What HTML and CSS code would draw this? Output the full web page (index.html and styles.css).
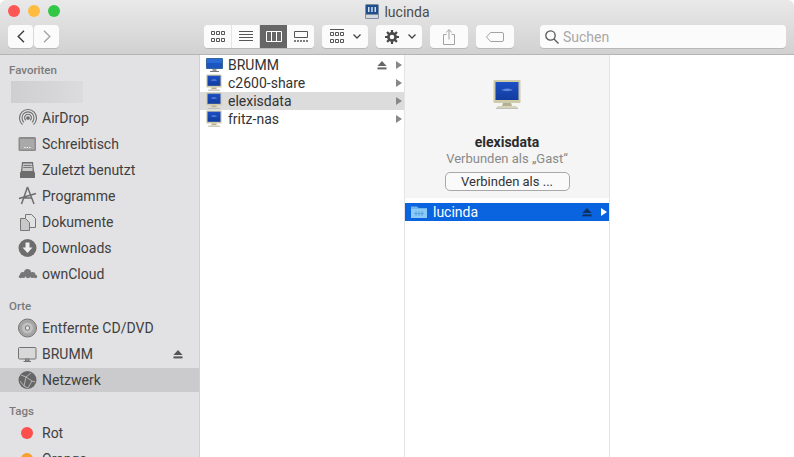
FILE: index.html
```html
<!DOCTYPE html>
<html lang="de">
<head>
    <meta charset="UTF-8">
    <meta name="viewport" content="width=device-width, initial-scale=1.0">
    <title>lucinda</title>
    <link rel="stylesheet" href="styles.css">
</head>
<body>
    <svg class="defs" width="0" height="0">
        <defs>
            <linearGradient id="screen" x1="0" y1="0" x2="0" y2="1">
                <stop offset="0" stop-color="#1d4fc4"/>
                <stop offset="1" stop-color="#123c9e"/>
            </linearGradient>
        </defs>
        <symbol id="monitor" viewBox="0 0 32 32">
            <rect x="2.500" y="1" width="27" height="23" rx="1" fill="#cfcaa8"/>
            <rect x="4.500" y="3" width="23" height="18" fill="url(#screen)"/>
            <path d="M10 11c4-2 8-2 12 0-4 1.500-8 1.500-12 0z" fill="#5f86d8"/>
            <path d="M12 24h8l1 3H11z" fill="#b5b092"/>
            <path d="M7 27h18l2 2H5z" fill="#d8d4ba"/>
            <path d="M5 29h22v1H5z" fill="#9a9a9a" opacity=".6"/>
        </symbol>
        <symbol id="eject" viewBox="0 0 10 9">
            <path d="M5 0l4.500 5H.5z"/>
            <rect x=".5" y="6.400" width="9" height="2"/>
        </symbol>
    </svg>

    <div class="window">
        <header class="chrome">
            <div class="titlebar">
                <div class="lights">
                    <span class="light red"></span>
                    <span class="light yellow"></span>
                    <span class="light green"></span>
                </div>
                <div class="title">
                    <svg width="16" height="17" viewBox="0 0 16 17">
                        <rect x="1" y="1" width="14" height="15" rx="1.500" fill="#7e8ea0"/>
                        <rect x="2" y="2" width="12" height="9" fill="#1f4f8f"/>
                        <path d="M4 4h1.500v5H4zM7.200 4h1.500v5H7.200zM10.500 4H12v5h-1.500z" fill="#cfe0f2"/>
                        <rect x="2" y="12" width="12" height="3" fill="#d5d9de"/>
                    </svg>
                    <span>lucinda</span>
                </div>
            </div>
            <div class="toolbar">
                <div class="tool-group">
                    <button class="tool nav">
                        <svg width="8" height="13" viewBox="0 0 8 13"><path d="M7 .700L1.200 6.500 7 12.300" fill="none" stroke="#3c3c3c" stroke-width="1.400"/></svg>
                    </button>
                    <button class="tool nav">
                        <svg width="8" height="13" viewBox="0 0 8 13"><path d="M1 .700l5.800 5.800L1 12.300" fill="none" stroke="#a5a5a5" stroke-width="1.400"/></svg>
                    </button>
                </div>
                <div class="tool-segment">
                    <button class="seg">
                        <svg width="14" height="11" viewBox="0 0 14 11" fill="none" stroke="#555"><path d="M.5.500h3v3h-3zM5.500.500h3v3h-3zM10.500.500h3v3h-3zM.5 7.500h3v3h-3zM5.500 7.500h3v3h-3zM10.500 7.500h3v3h-3z"/></svg>
                    </button>
                    <button class="seg">
                        <svg width="14" height="11" viewBox="0 0 14 11" stroke="#555"><path d="M0 .5h14M0 3.500h14M0 6.500h14M0 9.500h14"/></svg>
                    </button>
                    <button class="seg active">
                        <svg width="16" height="11" viewBox="0 0 16 11" fill="none" stroke="#fff"><path d="M.5.500h15v10H.5zM5.500.500v10M10.500.500v10"/></svg>
                    </button>
                    <button class="seg">
                        <svg width="14" height="11" viewBox="0 0 14 11" fill="none" stroke="#555"><path d="M.5.500h13v6H.5z"/><path d="M0 10h2M3 10h2M6 10h2M9 10h2M12 10h2" stroke-width="1.400"/></svg>
                    </button>
                </div>
                <button class="tool arrange">
                    <svg width="14" height="15" viewBox="0 0 14 15" fill="none" stroke="#555"><path d="M0 .5h14"/><path d="M.5 3.500h3v3h-3zM5.500 3.500h3v3h-3zM10.500 3.500h3v3h-3zM.5 10.500h3v3h-3zM5.500 10.500h3v3h-3zM10.500 10.500h3v3h-3z"/></svg>
                    <svg width="8" height="5" viewBox="0 0 8 5"><path d="M.5.500L4 4 7.500.5" fill="none" stroke="#444" stroke-width="1.300"/></svg>
                </button>
                <button class="tool action">
                    <svg width="14" height="14" viewBox="0 0 14 14">
                        <circle cx="7" cy="7" r="3.600" fill="none" stroke="#4a4a4a" stroke-width="2.600"/>
                        <path d="M7 0v14M0 7h14M2 2l10 10M12 2L2 12" stroke="#4a4a4a" stroke-width="2.200" stroke-dasharray="3 8 3"/>
                    </svg>
                    <svg width="8" height="5" viewBox="0 0 8 5"><path d="M.5.500L4 4 7.500.5" fill="none" stroke="#444" stroke-width="1.300"/></svg>
                </button>
                <button class="tool plain">
                    <svg width="12" height="16" viewBox="0 0 12 16" fill="none" stroke="#a3a3a3"><path d="M3.500 5.500h-3v10h11v-10h-3M6 10.500V.800M3.200 3.400L6 .7l2.800 2.700"/></svg>
                </button>
                <button class="tool plain">
                    <svg width="18" height="10" viewBox="0 0 18 10" fill="none" stroke="#a3a3a3"><path d="M4.500.500h11.500a1.500 1.500 0 0 1 1.500 1.500v6a1.500 1.500 0 0 1-1.500 1.500H4.500L.5 5z"/></svg>
                </button>
                <div class="search">
                    <svg width="14" height="14" viewBox="0 0 14 14" fill="none" stroke="#555" stroke-width="1.300"><circle cx="5.500" cy="5.500" r="4.700"/><path d="M9 9l4.500 4.500"/></svg>
                    <span>Suchen</span>
                </div>
            </div>
        </header>

        <div class="body">
            <nav class="sidebar">
                <div class="side-head">Favoriten</div>
                <div class="side-row"><span class="blurred"></span></div>
                <div class="side-row">
                    <svg class="side-icon" width="20" height="20" viewBox="0 0 20 20" fill="none" stroke="#6d6d6d" stroke-width="1.100">
                        <path d="M4.500 16.500a8.500 8.500 0 1 1 11 0M6 14.300a6 6 0 1 1 8 0M7.800 12.300a3.400 3.400 0 1 1 4.400 0"/>
                        <circle cx="10" cy="10" r="1.300" fill="#6d6d6d"/>
                    </svg>
                    <span>AirDrop</span>
                </div>
                <div class="side-row">
                    <svg class="side-icon" width="20" height="20" viewBox="0 0 20 20">
                        <rect x=".5" y="3" width="17.500" height="14" rx="1.500" fill="#8b8b8b"/>
                        <rect x="2" y="5" width="14.500" height="10.500" fill="#a9a9a9"/>
                        <path d="M6 13.500h1.500M8.500 13.500H10M11 13.500h1.500" stroke="#eee"/>
                    </svg>
                    <span>Schreibtisch</span>
                </div>
                <div class="side-row">
                    <svg class="side-icon" width="20" height="20" viewBox="0 0 20 20">
                        <path d="M4 2h11l1 9 1 2v5H2v-5l1-2z" fill="#6d6d6d"/>
                        <path d="M5 3.500h9l.7 7.500H4.300z" fill="#c9c9c9"/>
                        <path d="M5.500 5.500h8M5.300 7.500h8.400" stroke="#777"/>
                    </svg>
                    <span>Zuletzt benutzt</span>
                </div>
                <div class="side-row">
                    <svg class="side-icon" width="20" height="20" viewBox="0 0 20 20" fill="none" stroke="#6d6d6d" stroke-width="1.500">
                        <path d="M9.500 1L3.500 18M9.500 1l6.500 17M1 12.500l17-5M5 12h9"/>
                    </svg>
                    <span>Programme</span>
                </div>
                <div class="side-row">
                    <svg class="side-icon" width="20" height="20" viewBox="0 0 20 20" stroke="#777">
                        <path d="M7.500 2.500h6l4 4v9h-10z" fill="#e2e2e2"/>
                        <path d="M2.500 6.500h5l4 4v8h-9z" fill="#c8c8c8"/>
                    </svg>
                    <span>Dokumente</span>
                </div>
                <div class="side-row">
                    <svg class="side-icon" width="20" height="20" viewBox="0 0 20 20">
                        <circle cx="9.500" cy="10" r="9" fill="#6d6d6d"/>
                        <path d="M7.500 4.500h4v5h3l-5 5.500-5-5.500h3z" fill="#eee"/>
                    </svg>
                    <span>Downloads</span>
                </div>
                <div class="side-row">
                    <svg class="side-icon" width="20" height="20" viewBox="0 0 20 20" fill="#777">
                        <circle cx="9.500" cy="8.500" r="3.500"/><circle cx="5" cy="11" r="3"/>
                        <circle cx="14.500" cy="11" r="3"/><circle cx="2.500" cy="12.500" r="1.700"/>
                        <circle cx="17.500" cy="12.500" r="1.700"/><circle cx="10" cy="12" r="2.200"/>
                    </svg>
                    <span>ownCloud</span>
                </div>

                <div class="side-head spaced">Orte</div>
                <div class="side-row">
                    <svg class="side-icon" width="20" height="20" viewBox="0 0 20 20">
                        <circle cx="9.500" cy="10" r="9" fill="#a4a4a4" stroke="#757575"/>
                        <circle cx="9.500" cy="10" r="5.500" fill="#c0c0c0"/>
                        <circle cx="9.500" cy="10" r="2.200" fill="#e4e4e4" stroke="#777"/>
                    </svg>
                    <span>Entfernte CD/DVD</span>
                </div>
                <div class="side-row">
                    <svg class="side-icon" width="20" height="20" viewBox="0 0 20 20">
                        <rect x=".5" y="3.500" width="17.500" height="11.500" rx="1" fill="#d8d8d8" stroke="#737373"/>
                        <path d="M7.500 15h3.500v2H7.500zM5.500 17.500h7.500" stroke="#737373" fill="#a8a8a8"/>
                    </svg>
                    <span>BRUMM</span>
                    <svg class="side-eject" width="10" height="9"><use href="#eject"/></svg>
                </div>
                <div class="side-row selected">
                    <svg class="side-icon" width="20" height="20" viewBox="0 0 20 20">
                        <circle cx="9.500" cy="10" r="9" fill="#666"/>
                        <path d="M3 5l5 2 5-4M8 7l-2 9M8 7l6 4 3 1M14 11l-4 7M2 11l4 5 4 2" fill="none" stroke="#c8c8c8" stroke-width=".8"/>
                    </svg>
                    <span>Netzwerk</span>
                </div>

                <div class="side-head spaced">Tags</div>
                <div class="side-row">
                    <span class="tag-dot red"></span>
                    <span>Rot</span>
                </div>
                <div class="side-row">
                    <span class="tag-dot orange"></span>
                    <span>Orange</span>
                </div>
            </nav>

            <section class="column">
                <div class="file-row">
                    <svg width="20" height="18" viewBox="0 0 20 18">
                        <rect x="1" y="2" width="17" height="11" rx="1" fill="#33649a"/>
                        <rect x="2" y="3" width="15" height="9" fill="#1d55c0"/>
                        <path d="M2 3h15v4H2z" fill="#2a6ad6"/>
                        <path d="M7.500 13h4v2h-4z" fill="#999"/>
                        <path d="M5 15h9v1H5z" fill="#777"/>
                    </svg>
                    <span class="file-name">BRUMM</span>
                    <svg class="row-eject" width="10" height="9"><use href="#eject"/></svg>
                    <span class="arrow"></span>
                </div>
                <div class="file-row">
                    <svg width="20" height="18"><use href="#monitor" width="18" height="18"/></svg>
                    <span class="file-name">c2600-share</span>
                    <span class="arrow"></span>
                </div>
                <div class="file-row picked">
                    <svg width="20" height="18"><use href="#monitor" width="18" height="18"/></svg>
                    <span class="file-name">elexisdata</span>
                    <span class="arrow"></span>
                </div>
                <div class="file-row">
                    <svg width="20" height="18"><use href="#monitor" width="18" height="18"/></svg>
                    <span class="file-name">fritz-nas</span>
                    <span class="arrow"></span>
                </div>
            </section>

            <section class="column">
                <div class="server-info">
                    <svg width="32" height="32"><use href="#monitor"/></svg>
                    <div class="server-name">elexisdata</div>
                    <div class="server-user">Verbunden als „Gast“</div>
                    <button class="connect">Verbinden als ...</button>
                </div>
                <div class="file-row current">
                    <svg width="20" height="18" viewBox="0 0 20 18">
                        <path d="M1 3.500h6l1.500 1.500H17v10H1z" fill="#6cb5ee"/>
                        <path d="M1 6h16v9H1z" fill="#8ccbf5"/>
                        <path d="M6 8v5M9 8v5M12 8v5M4 10.500h10" stroke="#5aa4e0"/>
                    </svg>
                    <span class="file-name">lucinda</span>
                    <svg class="row-eject" width="10" height="9"><use href="#eject"/></svg>
                    <span class="arrow"></span>
                </div>
            </section>

            <section class="column last"></section>
        </div>
    </div>
</body>
</html>
```

FILE: styles.css
```css
* { box-sizing: border-box; }
html, body { height: 100%; }
body {
    margin: 0;
    background: #fff;
    font-family: Roboto, "Liberation Sans", sans-serif;
    color: #3d3d3d;
    overflow: hidden;
}
.defs { display: block; height: 0; }
.window {
    height: 457px;
    display: flex;
    flex-direction: column;
    border-radius: 6px 6px 0 0;
    overflow: hidden;
}

/* toolbar */
.chrome {
    height: 55px;
    flex: none;
    background: linear-gradient(#e9e9e9, #d1d1d1);
    border-bottom: 1px solid #b5b5b5;
}
.titlebar {
    height: 25px;
    display: flex;
    align-items: center;
    justify-content: center;
    position: relative;
}
.lights {
    position: absolute;
    left: 8px;
    top: 5px;
    display: flex;
    gap: 8px;
}
.light { width: 12px; height: 12px; border-radius: 50%; }
.light.red { background: #fc5753; }
.light.yellow { background: #fdbc40; }
.light.green { background: #33c748; }
.title {
    display: flex;
    align-items: center;
    gap: 4px;
    font-size: 14px;
    color: #4b4b4b;
    margin-top: -2px;
}
.toolbar {
    height: 23px;
    display: flex;
    align-items: stretch;
    padding-left: 8px;
}
button {
    font-family: inherit;
    border: none;
    padding: 0;
    margin: 0;
    background: #fbfbfb;
    display: flex;
    align-items: center;
    justify-content: center;
}
.tool {
    border-radius: 4px;
    box-shadow: 0 1px 0 #b9b9b9;
}
.tool-group { display: flex; gap: 1px; width: 51px; }
.nav { width: 25px; }
.tool-segment {
    display: flex;
    margin-left: 145px;
    width: 110px;
    border-radius: 4px;
    overflow: hidden;
    box-shadow: 0 1px 0 #b9b9b9;
    background: #fbfbfb;
}
.seg {
    width: 27px;
    flex: 1;
    border-right: 1px solid #e4e4e4;
}
.seg:last-child { border-right: none; }
.seg.active { background: #666; border-right: none; }
.arrange { width: 46px; margin-left: 8px; gap: 9px; }
.action { width: 46px; margin-left: 8px; gap: 9px; padding-left: 3px; }
.plain { width: 38px; margin-left: 8px; }
.search {
    width: 246px;
    margin-left: 26px;
    display: flex;
    align-items: center;
    gap: 4px;
    padding-left: 5px;
    background: #fbfbfb;
    border-radius: 4px;
    box-shadow: 0 1px 0 #b9b9b9;
    font-size: 14px;
    color: #a8a8a8;
}

/* sidebar */
.body { flex: 1; display: flex; min-height: 0; }
.sidebar {
    width: 200px;
    flex: none;
    padding-top: 5px;
    background: #e2e2e4;
    border-right: 1px solid #d0d0d0;
    overflow: hidden;
}
.side-head {
    height: 19px;
    padding: 1px 0 0 9px;
    font-size: 11.5px;
    font-weight: 500;
    line-height: 19px;
    color: #7a7a7a;
}
.side-head.spaced { margin-top: 9px; }
.side-row {
    height: 26px;
    display: flex;
    align-items: center;
    padding-left: 18px;
    font-size: 14px;
    color: #404040;
}
.side-row.selected {
    height: 24px;
    margin: 1px 0;
    background: #cbcbcd;
}
.side-icon { flex: none; margin-right: 4px; }
.side-eject { margin-left: auto; margin-right: 16px; fill: #555; }
.blurred {
    width: 72px;
    height: 22px;
    margin-left: -7px;
    background: linear-gradient(90deg, #cfcfd1, #d6d6d8 60%, #dcdcde);
}
.tag-dot {
    width: 12px;
    height: 12px;
    border-radius: 50%;
    margin: 0 9px 0 3px;
}
.tag-dot.red { background: #fc4f4b; }
.tag-dot.orange { background: #f9a02e; }

/* columns */
.column {
    width: 205px;
    flex: none;
    padding-top: 1px;
    background: #fff;
    border-right: 1px solid #e4e4e4;
}
.column.last { flex: 1; border-right: none; }
.file-row {
    height: 18px;
    display: flex;
    align-items: center;
    padding: 0 2px 0 5px;
    font-size: 14px;
    color: #333;
}
.file-row svg:first-child { flex: none; }
.file-name { margin-left: 3px; }
.row-eject { margin-left: auto; fill: #666; }
.arrow {
    width: 0;
    height: 0;
    margin-left: 9px;
    border-left: 6px solid #888;
    border-top: 4px solid transparent;
    border-bottom: 4px solid transparent;
}
.file-name + .arrow { margin-left: auto; }
.file-row.picked { background: #dcdcdc; }
.file-row.current {
    margin-top: 5px;
    background: #0a64e0;
    color: #fff;
}
.current .arrow { border-left-color: #fff; }
.current .row-eject { fill: #10305f; }
.server-info {
    height: 143px;
    margin-top: -1px;
    display: flex;
    flex-direction: column;
    align-items: center;
    padding-top: 24px;
    background: #f5f5f5;
}
.server-name {
    margin-top: 23px;
    font-size: 14px;
    font-weight: 700;
    color: #2b2b2b;
}
.server-user {
    margin-top: 1px;
    font-size: 13px;
    color: #8a8a8a;
}
.connect {
    width: 125px;
    height: 19px;
    margin-top: 6px;
    font-size: 13px;
    color: #333;
    background: #fafafa;
    border: 1px solid #a8a8a8;
    border-radius: 5px;
}
```
